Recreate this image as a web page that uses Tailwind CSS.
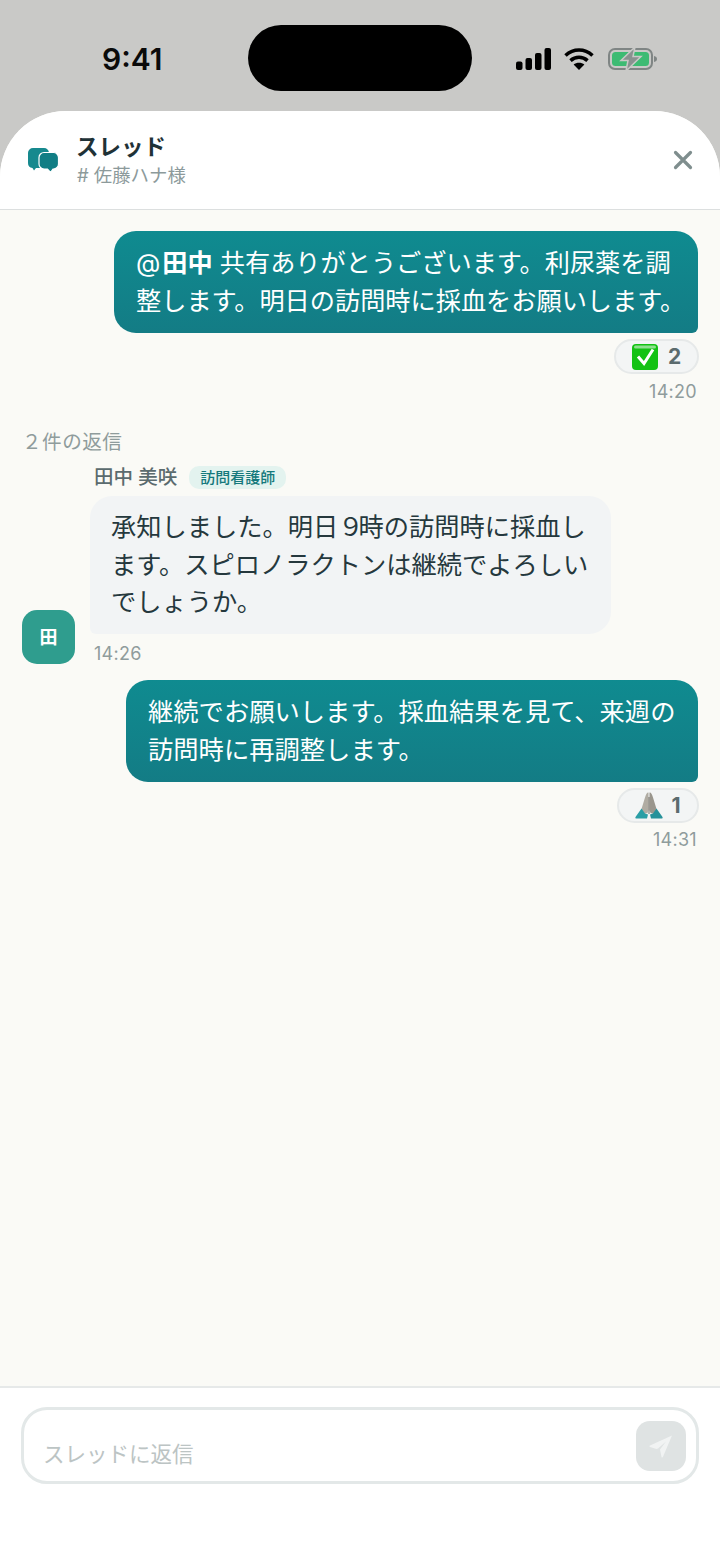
<!DOCTYPE html>
<html lang="ja">
<head>
<meta charset="utf-8">
<script src="https://cdn.jsdelivr.net/npm/@tailwindcss/browser@4"></script>
</head>
<body class="m-0">
<div class="w-[720px] h-[1565px] bg-[#c9c9c7] flex flex-col overflow-hidden font-['Inter','Noto_Sans_CJK_JP',sans-serif]">
  <!-- status bar -->
  <div class="relative h-[111px] shrink-0">
    <div class="absolute left-[248px] top-[25px] w-[224px] h-[66px] rounded-[33px] bg-black"></div>
    <div class="flex items-center justify-between h-full pt-[7px] pl-[102px] pr-[63px]">
      <span class="text-[30px] leading-none font-semibold text-[#0a0a0a]">9:41</span>
      <div class="flex items-center gap-[13px]">
        <svg width="35" height="22" viewBox="0 0 35 22" fill="#000"><rect x="0" y="13.500" width="6.500" height="8.500" rx="2"/><rect x="9.500" y="10" width="6.500" height="12" rx="2"/><rect x="19" y="5" width="6.500" height="17" rx="2"/><rect x="28.500" y="0" width="6.500" height="22" rx="2"/></svg>
        <svg width="30" height="22" viewBox="0 0 30 22" fill="none" stroke="#000" stroke-width="3.6"><path d="M1.500 7.500C9.500 0.200 20.500 0.200 28.500 7.500"/><path d="M6.500 12.600C11.500 8.200 18.500 8.200 23.500 12.600"/><path d="M15 22L9.600 16.600C12.600 14 17.400 14 20.400 16.600Z" fill="#000" stroke="none"/></svg>
        <svg width="49" height="24" viewBox="0 0 49 24" class="ml-[1px]"><rect x="1" y="2" width="43" height="20" rx="6" fill="none" stroke="#7f8584" stroke-width="2"/><rect x="4" y="5" width="37" height="14" rx="3.500" fill="#3dbb73"/><path d="M46 9c2 .4 3 1.400 3 3s-1 2.600-3 3z" fill="#7f8584"/><path d="M27 0L13 13.500h7L18 24l15-14.500h-8z" fill="#8a9190" stroke="#c9c9c7" stroke-width="1.500"/></svg>
      </div>
    </div>
  </div>

  <!-- sheet -->
  <div class="flex-1 flex flex-col rounded-t-[66px] overflow-hidden bg-[#fafaf6]">
    <header class="h-[99px] shrink-0 bg-white border-b border-[#dcdfdf] flex items-center pl-[27px] pr-[27px]">
      <svg width="32" height="28" viewBox="0 0 32 28">
        <path d="M6 2h11a5 5 0 0 1 5 5v10a5 5 0 0 1-5 5H9l-2 2.500L5.500 22A5 5 0 0 1 1 17V7a5 5 0 0 1 5-5Z" fill="#16898e"/>
        <path d="M17 6.500h9.500a5 5 0 0 1 5 5V18a5 5 0 0 1-5 5H26l-2.500 3.500-3-3.500H17a5 5 0 0 1-5-5v-6.500a5 5 0 0 1 5-5Z" fill="#117e85" stroke="#fff" stroke-width="1.200"/>
      </svg>
      <div class="ml-[17px] flex-1">
        <div class="text-[22.500px] leading-[30px] font-bold text-[#1f3237]">スレッド</div>
        <div class="ml-[1px] text-[18.400px] leading-[26px] text-[#8c9a9b]"># 佐藤ハナ様</div>
      </div>
      <svg width="20" height="20" viewBox="0 0 20 20" fill="none" stroke="#7f8e8e" stroke-width="3.200" stroke-linecap="round"><path d="M2.500 2.500L17.500 17.500M17.500 2.500L2.500 17.500"/></svg>
    </header>

    <main class="flex-1 pt-[21px] px-[22px] flex flex-col">
      <!-- message 1 -->
      <div class="flex flex-col items-end">
        <div class="w-[584px] h-[102px] pl-[22px] pt-[13px] rounded-[22px] rounded-br-[6px] bg-gradient-to-b from-[#0f8b90] to-[#137c85] text-white text-[25.200px] leading-[38px] whitespace-nowrap"><span class="font-normal mr-[2px]">@</span><span class="font-bold">田中</span> 共有ありがとうございます。利尿薬を調<br>整します。明日の訪問時に採血をお願いします。</div>
        <div class="mt-[6px] mr-[-1px] w-[85px] h-[35px] rounded-full border-2 border-[#e6e9e9] bg-[#f3f5f5] flex items-center justify-center gap-[10px]">
          <svg width="26" height="26" viewBox="0 0 26 26"><rect width="26" height="26" rx="4" fill="#13c213"/><rect x="2" y="1.500" width="22" height="3" rx="1.500" fill="#8fe08f"/><path d="M6 12.500l6 7L21 5.500" fill="none" stroke="#fff" stroke-width="3"/></svg>
          <span class="text-[21px] leading-none font-bold text-[#5b6b6e]">2</span>
        </div>
        <div class="mt-[6px] mr-[1px] text-[18px] tracking-[0.3px] leading-[24px] text-[#8f9c9c]">14:20</div>
      </div>

      <div class="mt-[25px] text-[19.600px] tracking-[0.5px] leading-[26px] text-[#8f9c9c]">２件の返信</div>

      <!-- message 2 -->
      <div class="flex items-end mt-[9px]">
        <div class="w-[53px] h-[54px] rounded-[15px] bg-[#2f9d8e] text-white font-bold text-[18px] flex items-center justify-center shrink-0 relative top-[-2px]">田</div>
        <div class="ml-[15px] flex-1">
          <div class="flex items-center h-[27px] ml-[4px]">
            <span class="text-[19.500px] font-medium text-[#5b6b6e]">田中 美咲</span>
            <span class="ml-[12px] px-[11px] h-[23px] rounded-[10px] bg-[#e3f3ef] text-[#15797c] text-[15px] font-medium leading-[23px]">訪問看護師</span>
          </div>
          <div class="w-[521px] h-[138px] mt-[5px] pl-[21px] pt-[13px] rounded-[22px] rounded-bl-[6px] bg-[#f2f4f5] text-[#25383d] text-[25.250px] leading-[37.500px] whitespace-nowrap">承知しました。明日<span class="tracking-[-5px]">９</span>時の訪問時に採血し<br>ます。スピロノラクトンは継続でよろしい<br>でしょうか。</div>
          <div class="mt-[8px] ml-[4px] text-[18px] tracking-[0.3px] leading-[24px] text-[#8f9c9c]">14:26</div>
        </div>
      </div>

      <!-- message 3 -->
      <div class="flex flex-col items-end mt-[14px]">
        <div class="w-[572px] h-[102px] pl-[22px] pt-[13px] rounded-[22px] rounded-br-[6px] bg-gradient-to-b from-[#0f8b90] to-[#137c85] text-white text-[25.300px] leading-[38px] whitespace-nowrap">継続でお願いします。採血結果を見て、来週の<br>訪問時に再調整します。</div>
        <div class="mt-[6px] mr-[-1px] w-[82px] h-[35px] rounded-full border-2 border-[#e6e9e9] bg-[#f3f5f5] flex items-center justify-center gap-[8px]">
          <svg width="28" height="28" viewBox="0 0 28 28">
            <path d="M13.500 0.500c-2 0-2.500 2-3.500 5L6.500 17l2 5 4-1 1-3Z" fill="#b0aca3"/>
            <path d="M14.500 0.500c2 0 2.500 2 3.500 5L21.500 17l-2 5-4-1-1-3Z" fill="#9a968d"/>
            <path d="M6.500 16.500L0.500 25c-.5 1 .2 1.500 1 1.500H12l1-4-3-1Z" fill="#2a9ea5"/>
            <path d="M21.500 16.500L27.500 25c.5 1-.2 1.500-1 1.500H16l-1-4 3-1Z" fill="#27929a"/>
            <path d="M14 5v17" stroke="#6f6c65" stroke-width="1"/>
          </svg>
          <span class="text-[21px] leading-none font-bold text-[#5b6b6e]">1</span>
        </div>
        <div class="mt-[5px] mr-[1px] text-[18px] tracking-[0.3px] leading-[24px] text-[#8f9c9c]">14:31</div>
      </div>
    </main>

    <footer class="h-[179px] shrink-0 bg-white border-t-2 border-[#e6e9e9] pt-[19px] px-[21px]">
      <div class="h-[77px] rounded-[26px] border-[3px] border-[#e3e8e8] flex items-center justify-between pl-[19px] pr-[10px]">
        <span class="mt-[17px] text-[21.500px] leading-[30px] text-[#bcc4c4]">スレッドに返信</span>
        <div class="w-[50px] h-[50px] rounded-[14px] bg-[#dfe3e3] flex items-center justify-center">
          <svg width="24" height="24" viewBox="0 0 24 24"><path d="M23 1.500L1 11.500c-.7.4-.6 1.200 0 1.400l6.500 2 1.500-.5 8-7-6 8 1.500 7.500c.2.800 1 .9 1.400.2Z" fill="#f1f3f3"/></svg>
        </div>
      </div>
    </footer>
  </div>
</div>
</body>
</html>
